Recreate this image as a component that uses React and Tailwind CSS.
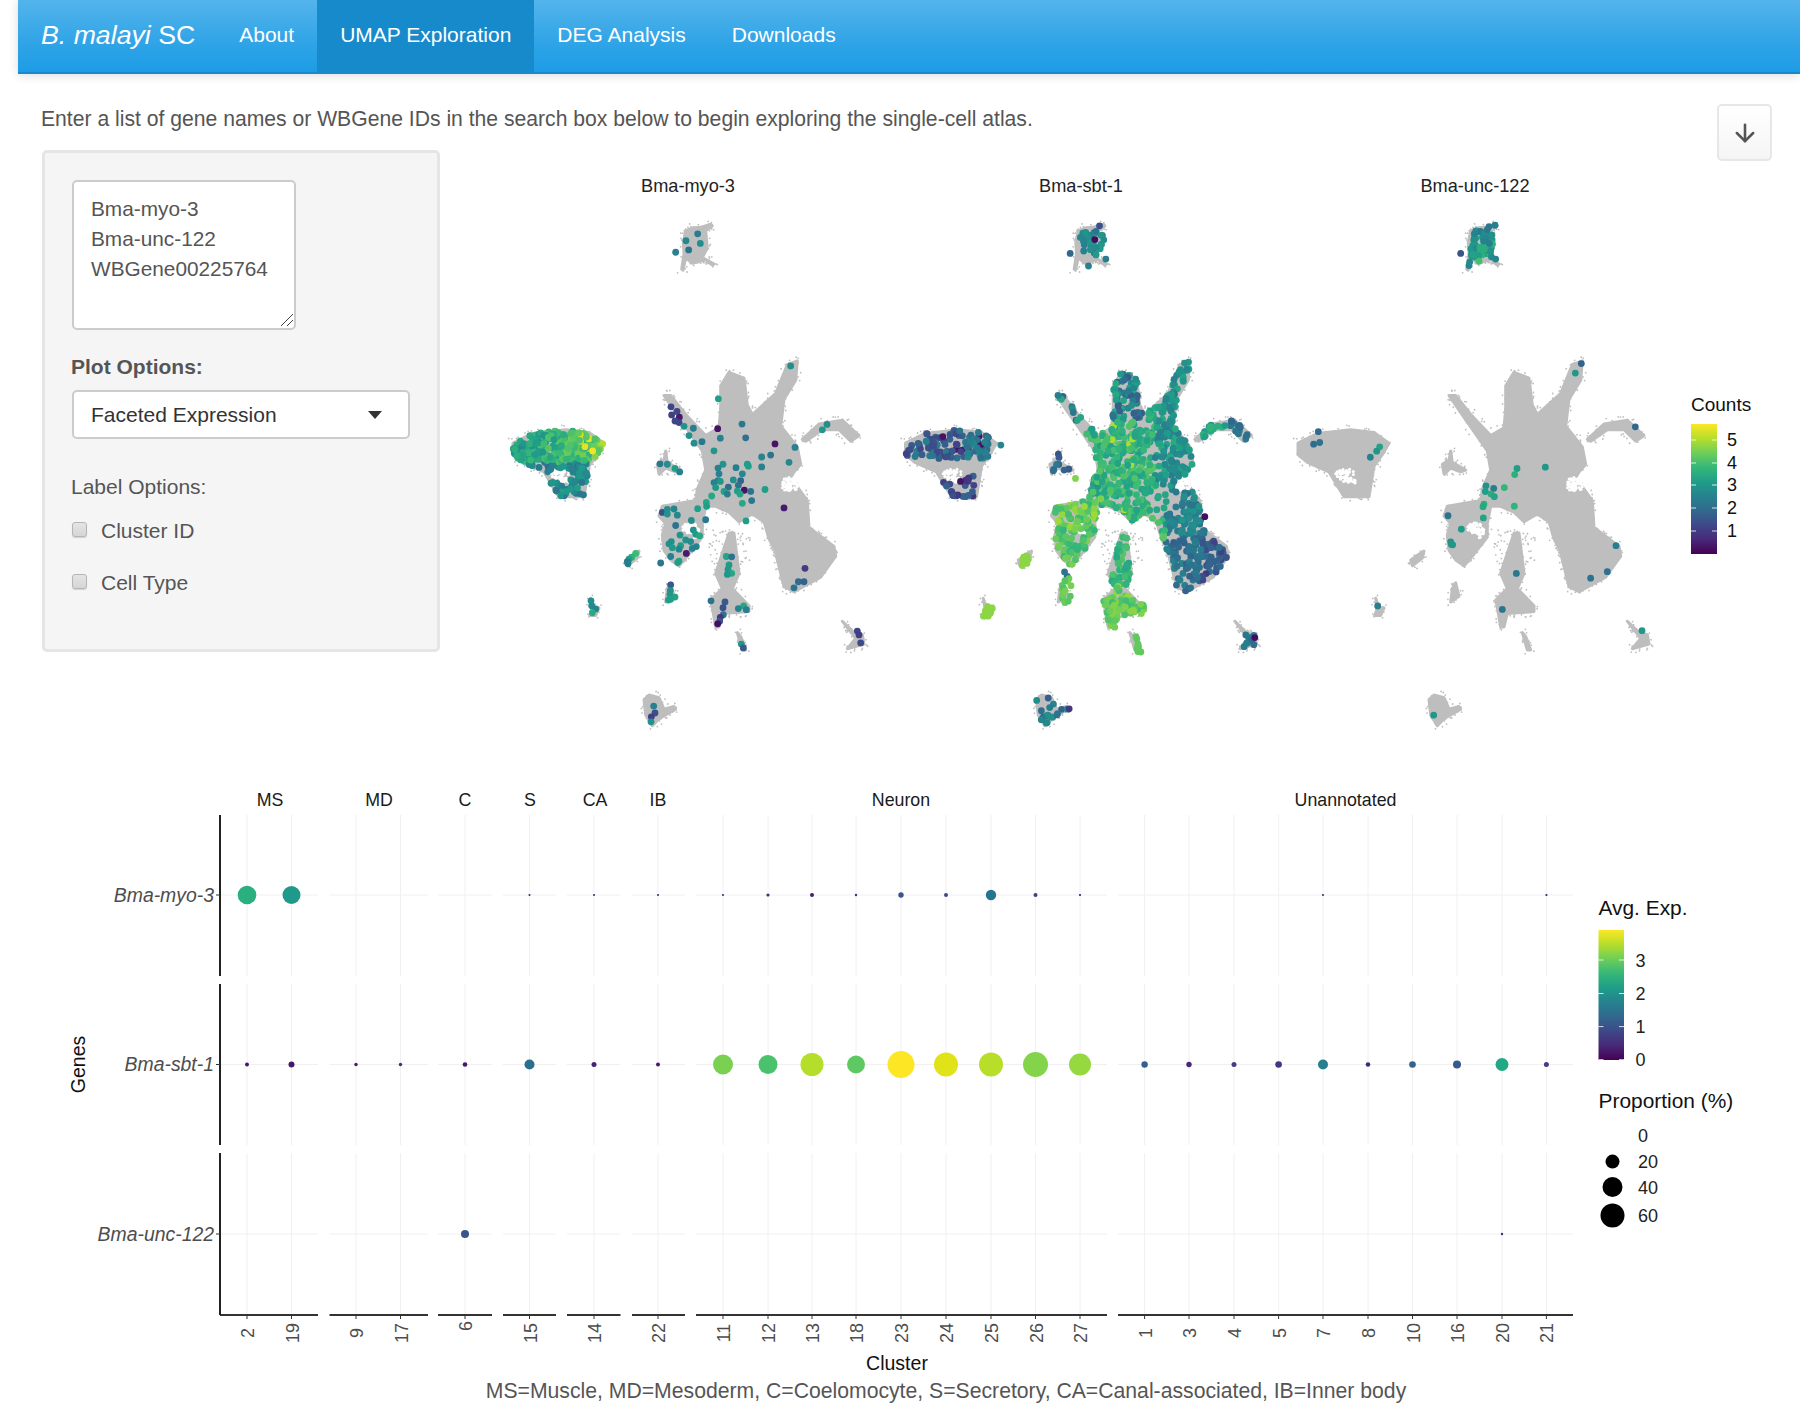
import { ArrowDown } from 'lucide-react'

const VIRIDIS = ['#440154', '#482878', '#3e4989', '#31688e', '#26828e', '#1f9e89', '#35b779', '#6ece58', '#b5de2b', '#fde725']

function viridis(t) {
  const p = Math.min(Math.max(t, 0), 1) * (VIRIDIS.length - 1)
  const i = Math.min(Math.floor(p), VIRIDIS.length - 2)
  const f = p - i
  const a = VIRIDIS[i]
  const b = VIRIDIS[i + 1]
  const mix = (s) => {
    const ca = parseInt(a.slice(s, s + 2), 16)
    const cb = parseInt(b.slice(s, s + 2), 16)
    return Math.round(ca + (cb - ca) * f)
  }
  return `rgb(${mix(1)},${mix(3)},${mix(5)})`
}
const countColor = (v) => viridis(v / 5.7)

function makeRandom(seed) {
  let a = seed
  return () => {
    a = (a + 0x6d2b79f5) | 0
    let t = Math.imul(a ^ (a >>> 15), 1 | a)
    t = (t + Math.imul(t ^ (t >>> 7), 61 | t)) ^ t
    return ((t ^ (t >>> 14)) >>> 0) / 4294967296
  }
}

// umap outlines, in crop pixels of the first panel (see toX / toY)
const MAIN = [[695,590],[720,555],[765,570],[775,640],[790,665],[860,610],[895,535],[925,525],[920,575],[885,625],[875,695],[925,750],[935,795],[915,815],[905,830],[930,860],[955,890],[960,960],[1035,1010],[1040,1035],[995,1090],[915,1128],[885,1115],[858,1020],[840,990],[825,945],[790,925],[750,945],[720,920],[680,905],[650,905],[640,950],[640,985],[600,1030],[570,1060],[545,1045],[525,1020],[520,980],[530,950],[510,930],[520,905],[620,890],[625,860],[650,810],[640,760],[600,710],[560,660],[525,615],[545,615],[590,665],[650,720],[690,700],[695,650]]
const LOWER = [[720,975],[735,975],[750,1080],[730,1120],[780,1165],[780,1180],[700,1185],[690,1220],[680,1220],[670,1170],[665,1150],[700,1120],[680,1080]]
const STREAK = [[745,1235],[755,1245],[770,1280],[760,1280]]
const ARM = [[940,730],[990,690],[1060,680],[1110,720],[1085,735],[1050,705],[1000,705],[950,735]]
const MID = [[530,760],[535,790],[575,810],[560,815],[530,805],[510,820],[505,795],[525,785]]
const LEG = [[545,1105],[555,1140],[530,1155],[535,1120]]
const BLOB = [[410,1045],[450,1022],[445,1040],[415,1060]]
const SMALL = [[305,1145],[315,1170],[330,1170],[320,1190],[303,1190],[310,1170]]
const RIGHT = [[1060,1205],[1095,1235],[1120,1240],[1125,1265],[1075,1277],[1100,1250]]
const BOTTOM = [[465,1410],[480,1398],[510,1405],[525,1435],[555,1428],[560,1435],[510,1460],[490,1478],[470,1450]]
const TOP = [[590,185],[610,178],[640,175],[665,168],[670,172],[650,185],[655,230],[640,255],[675,272],[670,275],[650,260],[610,270],[590,255],[582,288],[578,285],[585,245],[583,215]]
const MUSCLE = [[72,740],[130,715],[230,705],[300,712],[345,740],[325,770],[300,800],[285,880],[210,880],[165,815],[100,790],[72,770]]
const SHAPES = [MAIN, LOWER, STREAK, ARM, MID, LEG, BLOB, SMALL, RIGHT, BOTTOM, TOP, MUSCLE]
const HOLES = [[[880,835],[915,825],[930,865],[880,865]], [[600,945],[640,960],[620,990],[570,960]], [[180,815],[235,800],[245,845],[200,840]]]

const toX = (x) => 490 + x / 3
const toY = (y) => 160 + y / 2.613
const polyPoints = (poly) => poly.map(([x, y]) => `${toX(x).toFixed(1)},${toY(y).toFixed(1)}`).join(' ')

function inside(poly, x, y) {
  let hit = false
  for (let i = 0, j = poly.length - 1; i < poly.length; j = i++) {
    const [xi, yi] = poly[i]
    const [xj, yj] = poly[j]
    if (yi > y !== yj > y && x < ((xj - xi) * (y - yi)) / (yj - yi) + xi) hit = !hit
  }
  return hit
}

function scatter(poly, n, value, rand) {
  const xs = poly.map((p) => p[0])
  const ys = poly.map((p) => p[1])
  const x0 = Math.min(...xs)
  const x1 = Math.max(...xs)
  const y0 = Math.min(...ys)
  const y1 = Math.max(...ys)
  const out = []
  let tries = 0
  while (out.length < n && tries < n * 60) {
    tries++
    const x = x0 + rand() * (x1 - x0)
    const y = y0 + rand() * (y1 - y0)
    if (!inside(poly, x, y)) continue
    const v = value(x, y, rand())
    if (v === null) continue
    out.push([x, y, v])
  }
  return out
}

function makeSpeckle() {
  const rand = makeRandom(11)
  const dots = []
  SHAPES.forEach((poly) => {
    poly.forEach(([x, y], i) => {
      const [nx, ny] = poly[(i + 1) % poly.length]
      const steps = Math.ceil(Math.hypot(nx - x, ny - y) / 6)
      for (let s = 0; s < steps; s++) {
        const f = s / steps
        dots.push([x + (nx - x) * f + (rand() - 0.5) * 26, y + (ny - y) * f + (rand() - 0.5) * 26])
      }
    })
  })
  for (let i = 0; i < 22; i++) dots.push([655 + rand() * 65, 960 + rand() * 100])
  for (let i = 0; i < 16; i++) dots.push([750 + rand() * 35, 970 + rand() * 80])
  return dots
}
const SPECKLE = makeSpeckle()

function makeHoleSpots() {
  const rand = makeRandom(77)
  return HOLES.flatMap((poly) => scatter(poly, 60, () => 1, rand))
}
const HOLE_SPOTS = makeHoleSpots()

const MYO_DOTS = [[626,193,2.4],[591,211,2.7],[634,218,2.8],[599,235,2.2],[560,241,2.5],[905,538,2.8],[688,624,3.2],[546,645,1.2],[564,657,1.2],[548,666,1.1],[571,672,0.4],[558,682,1.2],[570,686,1.2],[686,702,0.3],[759,690,2.3],[613,701,2.4],[585,696,2.9],[600,720,2.9],[694,727,2.5],[770,726,2.1],[639,736,2.3],[615,740,2.8],[858,742,0.3],[918,751,2.5],[675,760,3],[845,771,2.2],[818,776,2.6],[900,790,2.7],[775,795,3.1],[702,795,3],[687,805,2.5],[741,804,2.4],[818,802,2.5],[778,800,3.2],[760,820,2.7],[690,820,2.5],[733,836,2.8],[687,838,2.4],[675,843,2.5],[694,840,3],[755,838,1.8],[748,850,2.2],[680,856,3],[718,855,2],[705,866,3.2],[766,863,0.3],[785,866,2.2],[828,861,3.2],[745,865,3.2],[753,873,3.3],[715,873,2.4],[668,878,3.4],[788,890,2.3],[760,897,3.4],[652,895,3.4],[653,905,3.2],[626,911,3.2],[885,909,0.4],[771,943,3.2],[650,940,2.3],[607,942,2.8],[520,921,1.4],[535,913,2.8],[555,912,2.6],[535,925,2.9],[565,928,2.7],[560,955,2.2],[613,967,2.9],[620,978,3.1],[632,982,3.4],[573,980,2.9],[590,993,2.9],[605,997,2.8],[547,997,2.9],[540,1003,2.8],[575,1008,3.2],[550,1013,3.1],[622,1010,2.6],[610,1015,2.5],[570,1017,2.6],[592,1028,0.4],[545,1036,2.5],[570,1048,3.3],[566,1052,3.2],[515,1053,2.3],[440,1028,3.9],[428,1038,3.7],[420,1043,3.2],[415,1050,2.3],[417,1055,2.4],[712,1036,3.3],[728,1037,2.2],[720,1058,3.1],[717,1070,3],[728,1080,3.4],[715,1083,3],[545,1110,1.6],[544,1125,2.9],[543,1135,3],[558,1142,3.3],[545,1148,3.2],[538,1150,3.2],[666,1152,2.2],[708,1155,1.6],[702,1170,1.4],[764,1165,3.4],[748,1172,2.6],[772,1175,2.4],[703,1188,2.2],[694,1195,0.9],[692,1205,1.5],[686,1212,0.2],[757,1265,3],[763,1275,1.6],[948,1067,1],[928,1102,2],[945,1102,1.8],[915,1118,2.2],[1105,1231,1.2],[1110,1241,1.1],[1115,1262,1.3],[1000,705,3],[1014,691,2.8],[513,794,2.3],[535,795,2.8],[558,806,3.2],[572,815,2.5],[306,1152,2.8],[308,1165,2.7],[320,1173,2.6],[310,1183,3.5],[494,1427,2.5],[498,1445,1.4],[487,1455,1.1],[486,1468,2.9]]

function makeMyo() {
  const rand = makeRandom(5)
  const muscle = scatter(MUSCLE, 320, (x, y, r) => {
    if (inside(HOLES[2], x, y)) return null
    if (y > 790) return 2.1 + r * 1.2
    const right = (x - 68) / 280
    return 2.4 + right * 1.5 + r * 1.2 + (x > 270 && x < 330 && r > 0.8 ? 0.8 : 0)
  }, rand)
  return [...muscle, ...MYO_DOTS]
}

function makeSbt() {
  const rand = makeRandom(23)
  const main = (x, y, r) => {
    if (inside(HOLES[0], x, y)) return null
    if (x > 800 && x < 905 && y > 855 && y < 935 && r > 0.2) return null
    if (x > 755 && x < 800 && y > 640 && y < 720 && r > 0.35) return null
    if (x > 850 && x < 920 && y > 960 && y < 1010 && r > 0.45) return null
    if (y > 980 && x > 850 && r > 0.7) return null
    if (y > 960 && x < 700) return 3.7 + r * 0.9
    if (x < 660 && y > 880) return 3.8 + r * 1.1
    if (y > 980 && x > 850) return x > 960 ? 0.9 + r * 1.8 : 1.7 + r * 1.3
    if (x > 855 && y > 860) return r > 0.55 ? 1.2 + r * 1.5 : 2.2 + r * 1.6
    if (x > 820 && y < 860) return 2.4 + r * 1.1
    if (y < 680 && x < 790) return 1.6 + r * 1.9
    if (y < 680) return 2.7 + r * 1.2
    if (x < 650) return 3 + r * 1.3
    return r > 0.94 ? 4.4 + r * 0.6 : 3.2 + r * 1.1
  }
  const groups = [
    scatter(MAIN, 900, main, rand),
    scatter(LOWER, 70, (x, y, r) => (y > 1110 ? 3.8 + r * 1 : 3.3 + r * 0.9), rand),
    scatter([[660,1145],[790,1150],[792,1185],[710,1190],[705,1225],[682,1225],[672,1170]], 60, (x, y, r) => 3.9 + r * 0.8, rand),
    scatter(ARM, 30, (x, y, r) => (x > 1040 ? 1.6 + r * 0.8 : 2.8 + r), rand),
    scatter(MID, 8, (x, y, r) => 1.4 + r, rand),
    scatter([[545,1075],[570,1075],[570,1155],[535,1160]], 16, (x, y, r) => (y < 1090 ? 2.2 : 4.1 + r * 0.5), rand),
    scatter([[418,1040],[445,1030],[440,1060],[420,1060]], 14, () => 4.7, rand),
    scatter([[308,1165],[335,1170],[328,1195],[305,1192]], 14, () => 4.7, rand),
    scatter([[752,1238],[765,1238],[785,1285],[770,1288]], 9, () => 4.3, rand),
    scatter(RIGHT, 12, (x, y, r) => 1.9 + r * 0.6, rand),
    scatter(BOTTOM, 16, (x, y, r) => 1.7 + r * 1.3, rand),
    scatter([[596,182],[660,185],[670,215],[650,250],[610,252],[595,225]], 34, (x, y, r) => 2.1 + r * 1, rand),
    scatter(MUSCLE, 130, (x, y, r) => {
      if (y > 780 && !(y > 825)) return null
      if (inside(HOLES[2], x, y)) return null
      if (x > 320) return null
      if (y > 800) return 0.8 + r * 1.2
      if (x > 180 && r > 0.85) return 0.3
      return x > 250 ? 1.8 + r * 1.3 : 1.1 + r * 1.5
    }, rand),
    [[358,745,2.6],[582,832,4.6],[970,932,0.2],[1120,1248,0.2],[654,172,1.4],[566,244,1.9],[673,259,2.4],[621,277,2.5],[640,208,0.2],[563,1434,0.9],[497,1470,2.7],[237,840,0.3]],
  ]
  return groups.flat()
}

// picked from a crop with other scales, moved onto the first panel here
const UNC_RAW = [[118,788,2],[104,817,2],[122,813,2.2],[302,823,3.3],[293,833,3],[274,847,2.6],[714,873,3.2],[707,887,3.6],[799,870,3],[621,913,2.9],[644,919,2.4],[619,926,3.2],[676,917,3.7],[636,932,3.5],[646,938,3.3],[615,955,3.6],[612,961,3.4],[706,960,3.7],[613,987,3.3],[507,982,2.2],[547,1013,3.1],[515,1042,2.9],[517,1048,3],[521,1049,3],[1011,1051,2.4],[712,1115,2.3],[935,1126,2.2],[985,1111,2.1],[670,1198,2.2],[296,1190,2.4],[1089,1247,3],[464,1442,3],[907,631,1.8],[889,653,3],[1069,777,1.9],[545,377,1.5],[648,312,2.4],[630,315,2.3],[625,322,2.3],[600,395,4],[650,390,2.6],[570,405,2.6],[572,397,2.7]]

function makeUnc() {
  const rand = makeRandom(41)
  const top = scatter([[575,325],[640,325],[642,385],[575,388]], 70, (x, y, r) => (y > 355 ? 2.7 + r * 1.2 : 2.3 + r * 0.8), rand)
  return [...top, ...UNC_RAW].map(([x, y, v]) => [x + 15, y * 1.133 - 183, v])
}

const PANELS = [
  { dx: 0, name: 'Bma-myo-3', label: 689, dots: makeMyo() },
  { dx: 392.5, name: 'Bma-sbt-1', label: 1082, dots: makeSbt() },
  { dx: 785, name: 'Bma-unc-122', label: 1476, dots: makeUnc() },
]

const FACETS = [
  { name: 'MS', label: 270, x0: 220, x1: 318, items: [['2', 247], ['19', 291.5]] },
  { name: 'MD', label: 379, x0: 329.5, x1: 428, items: [['9', 356], ['17', 400.5]] },
  { name: 'C', label: 465, x0: 438, x1: 492, items: [['6', 465]] },
  { name: 'S', label: 530, x0: 503, x1: 556, items: [['15', 529.5]] },
  { name: 'CA', label: 595, x0: 567, x1: 620.5, items: [['14', 594]] },
  { name: 'IB', label: 658, x0: 632, x1: 685, items: [['22', 658]] },
  { name: 'Neuron', label: 901, x0: 696, x1: 1107, items: [['11', 723], ['12', 768], ['13', 812], ['18', 856], ['23', 901], ['24', 946], ['25', 991], ['26', 1035.5], ['27', 1080]] },
  { name: 'Unannotated', label: 1345.5, x0: 1118, x1: 1573, items: [['1', 1144.6], ['3', 1189], ['4', 1234], ['5', 1278.6], ['7', 1323], ['8', 1368], ['10', 1412.5], ['16', 1457], ['20', 1502], ['21', 1546.4]] },
]

const ROWS = [
  { name: 'Bma-myo-3', y: 895, top: 815, bottom: 976 },
  { name: 'Bma-sbt-1', y: 1064.5, top: 984, bottom: 1145 },
  { name: 'Bma-unc-122', y: 1234, top: 1153, bottom: 1315 },
]

const DOTS = [
  [247, 895, 9.3, '#2ab07f'], [291.5, 895, 9, '#1f9a8a'], [529.5, 895, 1, '#481f70'], [594, 895, 1, '#481f70'], [658, 895, 1, '#481f70'],
  [723, 895, 1, '#481f70'], [768, 895, 1.6, '#472d7b'], [812, 895, 2, '#471d6e'], [856, 895, 1.2, '#472d7b'], [901, 895, 2.7, '#3b528b'],
  [946, 895, 2, '#3e4989'], [991, 895, 5.2, '#26758e'], [1035.5, 895, 2, '#433e85'], [1080, 895, 1.1, '#481f70'], [1323, 895, 1, '#481f70'], [1546.4, 895, 1.1, '#481f70'],
  [247, 1064.5, 2, '#46186b'], [291.5, 1064.5, 3, '#46186b'], [356, 1064.5, 1.7, '#471a6e'], [400.5, 1064.5, 1.7, '#472a7a'], [465, 1064.5, 2.3, '#46186b'],
  [529.5, 1064.5, 5, '#2a6f8e'], [594, 1064.5, 2.5, '#46237a'], [658, 1064.5, 2, '#46186b'], [723, 1064.5, 10, '#7ad151'], [768, 1064.5, 9.5, '#4ac16d'],
  [812, 1064.5, 11.5, '#b5de2b'], [856, 1064.5, 9, '#5ec962'], [901, 1064.5, 13.5, '#fde725'], [946, 1064.5, 12, '#dfe318'], [991, 1064.5, 12, '#b8de29'],
  [1035.5, 1064.5, 12.5, '#84d44b'], [1080, 1064.5, 11, '#95d840'], [1144.6, 1064.5, 3.2, '#35608d'], [1189, 1064.5, 2.7, '#482878'], [1234, 1064.5, 2.5, '#433e85'],
  [1278.6, 1064.5, 3.3, '#463480'], [1323, 1064.5, 5, '#277f8e'], [1368, 1064.5, 2.3, '#3b2f7f'], [1412.5, 1064.5, 3.3, '#33638d'], [1457, 1064.5, 4, '#375a8c'],
  [1502, 1064.5, 6.5, '#22a884'], [1546.4, 1064.5, 2.5, '#433e85'], [465, 1234, 4, '#39568c'], [1502, 1234, 1.2, '#482677'],
]

function UmapPlot() {
  return (
    <svg width="1290" height="610" viewBox="490 160 1290 610" className="shrink-0">
      <defs>
        <linearGradient id="counts-bar" x1="0" y1="1" x2="0" y2="0">
          {VIRIDIS.map((c, i) => <stop key={c} offset={i / (VIRIDIS.length - 1)} stopColor={c} />)}
        </linearGradient>
      </defs>
      {PANELS.map((panel) => (
        <g key={panel.name}>
          <text x={panel.label} y="192" textAnchor="middle" className="fill-[#222] text-[18.2px]">{panel.name}</text>
          <g transform={`translate(${panel.dx},0)`} className="blur-[0.35px]">
            {SHAPES.map((poly, i) => (
              <polygon key={i} points={polyPoints(poly)} fill="#bebebe" stroke="#bebebe" strokeWidth="3" strokeLinejoin="round" />
            ))}
            {SPECKLE.map(([x, y], i) => <circle key={i} cx={toX(x)} cy={toY(y)} r="0.9" fill="#bebebe" />)}
            {HOLE_SPOTS.map(([x, y], i) => <circle key={i} cx={toX(x)} cy={toY(y)} r="1.5" fill="#fff" />)}
            {panel.dots.map(([x, y, v], i) => <circle key={i} cx={toX(x)} cy={toY(y)} r="3.4" fill={countColor(v)} />)}
          </g>
        </g>
      ))}
      <text x="1692" y="411" className="fill-[#111] text-[19px]">Counts</text>
      <rect x="1692" y="424" width="26" height="130" fill="url(#counts-bar)" />
      {[['5', 440], ['4', 463], ['3', 485], ['2', 508], ['1', 531]].map(([t, y]) => (
        <g key={t}>
          <path d={`M1692 ${y}h5M1713 ${y}h5`} stroke="#fff" strokeOpacity="0.8" />
          <text x="1728" y={y + 6} className="fill-[#111] text-[18px]">{t}</text>
        </g>
      ))}
    </svg>
  )
}

function DotPlot() {
  return (
    <svg width="1740" height="595" viewBox="60 780 1740 595" className="block">
      <defs>
        <linearGradient id="exp-bar" x1="0" y1="1" x2="0" y2="0">
          {VIRIDIS.map((c, i) => <stop key={c} offset={i / (VIRIDIS.length - 1)} stopColor={c} />)}
        </linearGradient>
      </defs>

      {FACETS.map((f) => (
        <g key={f.name}>
          <text x={f.label} y="806" textAnchor="middle" className="fill-[#1a1a1a] text-[17.8px]">{f.name}</text>
          {ROWS.map((r) => (
            <g key={r.name} stroke="#f0f0f0">
              <path d={`M${f.x0} ${r.y}H${f.x1}`} />
              {f.items.map(([id, x]) => <path key={id} d={`M${x} ${r.top}V${r.bottom}`} />)}
            </g>
          ))}
          <path d={`M${f.x0} 1315H${f.x1}`} stroke="#333" strokeWidth="2" />
          {f.items.map(([id, x]) => (
            <g key={id}>
              <path d={`M${x} 1315v4`} stroke="#333" />
              <text
                transform={`translate(${x + 7},${id === '6' ? 1326 : 1333}) rotate(-90)`}
                textAnchor="middle"
                className="fill-[#4d4d4d] text-[18px]"
              >
                {id}
              </text>
            </g>
          ))}
        </g>
      ))}

      {ROWS.map((r) => (
        <g key={r.name}>
          <path d={`M220 ${r.top}V${r.bottom}`} stroke="#222" strokeWidth="2" />
          <path d={`M216 ${r.y}h4`} stroke="#333" />
          <text x="214" y={r.y + 6.5} textAnchor="end" className="fill-[#4d4d4d] text-[19.4px] italic">{r.name}</text>
        </g>
      ))}

      {DOTS.map(([x, y, r, c]) => <circle key={`${x}-${y}`} cx={x} cy={y} r={r} fill={c} />)}

      <text transform="translate(85,1064.5) rotate(-90)" textAnchor="middle" className="fill-[#111] text-[19.5px]">Genes</text>
      <text x="897" y="1370" textAnchor="middle" className="fill-[#111] text-[19.5px]">Cluster</text>

      <text x="1598.5" y="915" className="fill-[#111] text-[20.9px]">Avg. Exp.</text>
      <rect x="1598.5" y="930" width="25.5" height="130" fill="url(#exp-bar)" />
      {[['3', 960], ['2', 993.5], ['1', 1026.6], ['0', 1059.6]].map(([t, y]) => (
        <g key={t}>
          <path d={`M1598.5 ${y}h5M1619 ${y}h5`} stroke="#fff" strokeOpacity="0.8" />
          <text x="1635.5" y={y + 6.5} className="fill-[#222] text-[18px]">{t}</text>
        </g>
      ))}
      <text x="1598.5" y="1108" className="fill-[#111] text-[20.9px]">Proportion (%)</text>
      {[['0', 1135, 0], ['20', 1161.6, 7], ['40', 1187, 10], ['60', 1215.5, 12]].map(([t, y, r]) => (
        <g key={t}>
          <circle cx="1612.5" cy={y} r={r} fill="#000" />
          <text x="1638" y={y + 6.5} className="fill-[#222] text-[18px]">{t}</text>
        </g>
      ))}
    </svg>
  )
}

function Checkbox({ label, className }) {
  return (
    <label className={`flex h-[30px] items-center text-[#555] ${className}`}>
      <input
        type="checkbox"
        className="mb-[3px] ml-[1px] h-[15px] w-[15px] appearance-none rounded-[3px] border border-[#b5b5b5] bg-[linear-gradient(#e4e4e4,#d6d6d6)] shadow-[0_1px_1px_rgba(0,0,0,0.15)]"
      />
      <span className="ml-[14px]">{label}</span>
    </label>
  )
}

function App() {
  const links = ['About', 'UMAP Exploration', 'DEG Analysis', 'Downloads']

  return (
    <div className="min-h-[1422px] bg-white font-['Liberation_Sans',Arial,sans-serif] text-[21.2px] leading-[30px] text-[#555]">
      <nav className="ml-[18px] flex h-[74px] border-b-2 border-[#178acc] bg-[linear-gradient(#54b4eb,#2fa4e7_60%,#1d9ce5)] text-[21px] shadow-[0_1px_10px_rgba(0,0,0,0.15)]">
        <a className="flex items-center pb-[2px] pl-[23px] pr-[21px] text-[26.7px] text-white">
          <span><em>B. malayi</em> SC</span>
        </a>
        {links.map((link) => (
          <a
            key={link}
            className={`flex items-center px-[23px] pb-[2px] text-white ${link === 'UMAP Exploration' ? 'bg-[#178acc]' : ''}`}
          >
            {link}
          </a>
        ))}
      </nav>

      <main className="relative pl-[41px] pt-[33px]">
        <p className="text-[21.15px] leading-[24px]">
          Enter a list of gene names or WBGene IDs in the search box below to begin exploring the single-cell atlas.
        </p>

        {/* Download button sits over the plot area */}
        <button className="absolute right-[28px] top-[30px] flex h-[57px] w-[55px] items-center justify-center rounded-[5px] border-2 border-[#e7e7e7] bg-[linear-gradient(#fff,#f5f5f5)] text-[#555]">
          <ArrowDown size={28} strokeWidth={2.2} />
        </button>

        <div className="mt-[19px] flex items-start">
          <aside className="ml-[1px] h-[502px] w-[398px] shrink-0 rounded-[5px] border-[3px] border-[#e5e5e5] bg-[#f5f5f5] pl-[26px] pr-[27px] pt-[27px] text-[21px]">
            <div className="relative ml-[1px] h-[150px] w-[224px]">
              <textarea
                defaultValue={'Bma-myo-3\nBma-unc-122\nWBGene00225764'}
                className="block h-full w-full resize-none rounded-[5px] border-2 border-[#ccc] bg-white px-[17px] py-[12px] text-[20.8px] text-[#555] outline-none"
              />
              <svg className="absolute bottom-[3px] right-[2px]" width="14" height="14" viewBox="0 0 14 14">
                <path d="M1 13 L13 1 M7 13 L13 7" stroke="#444" strokeWidth="1" fill="none" />
              </svg>
            </div>
            <p className="mt-[22px] font-bold">Plot Options:</p>
            <div className="ml-[1px] mt-[8px] flex h-[49px] w-[338px] items-center justify-between rounded-[5px] border-2 border-[#ccc] bg-white pl-[17px] pr-[26px] text-[#333]">
              <span>Faceted Expression</span>
              <span className="h-0 w-0 border-x-[7px] border-t-[8px] border-x-transparent border-t-[#333]" />
            </div>
            <p className="mt-[33px]">Label Options:</p>
            <Checkbox label="Cluster ID" className="mt-[14px]" />
            <Checkbox label="Cell Type" className="mt-[22px]" />
          </aside>

          <div className="ml-[49px] mt-[10px]">
            <UmapPlot />
          </div>
        </div>

        <div className="ml-[19px] mt-[10px]">
          <DotPlot />
          <p className="mt-[4px] w-[1772px] text-center leading-[24px]">
            MS=Muscle, MD=Mesoderm, C=Coelomocyte, S=Secretory, CA=Canal-associated, IB=Inner body
          </p>
        </div>
      </main>
    </div>
  )
}

export default App
